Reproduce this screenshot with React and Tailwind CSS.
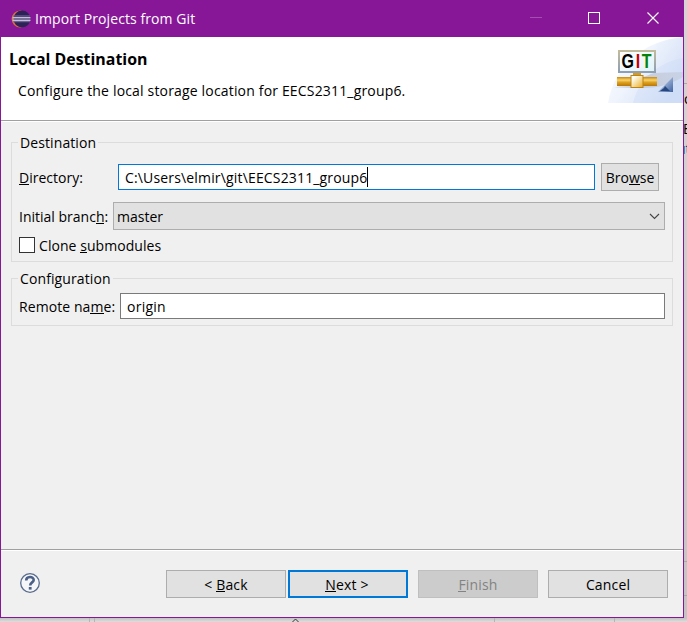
import React from 'react';

const U = ({ children }) => (
  <span className="relative">
    {children}
    <span className="absolute inset-x-0 bottom-[2px] h-px bg-current" />
  </span>
);

const EclipseIcon = () => (
  <svg width="20" height="18" viewBox="0 0 20 18" className="block">
    <circle cx="9.2" cy="9" r="8.6" fill="#d9713c" />
    <circle cx="11" cy="9" r="8.5" fill="#2c2255" />
    <path d="M2 6h17M2 11.7h17" stroke="#7d6fa8" strokeWidth="1" />
    <path d="M1.5 7.7h18M1.5 10.3h18" stroke="#c6bdd8" strokeWidth="1.5" />
  </svg>
);

const GitBanner = () => (
  <svg width="75" height="66" viewBox="0 0 75 66" className="block">
    <defs>
      <linearGradient id="sky" x1="0" y1="0" x2="1" y2="0.6">
        <stop offset="0" stopColor="#ffffff" />
        <stop offset="0.5" stopColor="#eff4fd" />
        <stop offset="1" stopColor="#d3dff6" />
      </linearGradient>
      <linearGradient id="sign" x1="0" y1="0" x2="1" y2="1">
        <stop offset="0" stopColor="#ffffff" />
        <stop offset="1" stopColor="#dff2f8" />
      </linearGradient>
      <linearGradient id="frame" x1="0" y1="0" x2="0" y2="1">
        <stop offset="0" stopColor="#c1bb9b" />
        <stop offset="1" stopColor="#8d9fb4" />
      </linearGradient>
      <linearGradient id="pipe" x1="0" y1="0" x2="0" y2="1">
        <stop offset="0" stopColor="#c88a10" />
        <stop offset="0.35" stopColor="#f9d268" />
        <stop offset="0.6" stopColor="#dda021" />
        <stop offset="1" stopColor="#b97805" />
      </linearGradient>
      <linearGradient id="node" x1="0" y1="0" x2="1" y2="1">
        <stop offset="0.2" stopColor="#fffdf2" />
        <stop offset="1" stopColor="#eaaa20" />
      </linearGradient>
      <linearGradient id="shade" x1="0" y1="0" x2="1" y2="0">
        <stop offset="0" stopColor="#b9bdc8" stopOpacity="0.2" />
        <stop offset="0.3" stopColor="#b9bdc8" stopOpacity="0.7" />
        <stop offset="1" stopColor="#b9bdc8" stopOpacity="0.35" />
      </linearGradient>
      <linearGradient id="fin" x1="0" y1="0" x2="1" y2="1">
        <stop offset="0.4" stopColor="#9db4d8" />
        <stop offset="1" stopColor="#3f62a0" />
      </linearGradient>
    </defs>
    <path d="M0 66C6 30 34 4 75 0V66Z" fill="url(#sky)" />
    <path d="M25 66C30 44 48 26 75 21V66Z" fill="#c9d9f5" fillOpacity="0.35" />
    <path d="M6 51L46 36L75 35V40C62 48 48 51 36 51Z" fill="url(#shade)" />
    <rect x="11" y="14" width="36" height="21" fill="url(#sign)" stroke="url(#frame)" strokeWidth="2" />
    <rect x="25" y="36" width="8" height="3" fill="#d49a22" />
    <rect x="9" y="40" width="40" height="9" fill="url(#pipe)" />
    <rect x="23" y="38.5" width="12" height="12" fill="url(#node)" stroke="#b98316" />
    <path d="M65 40V55H50Z" fill="url(#fin)" />
    <path d="M52 54L56 51L57 49L60 52L62 54Z" fill="#27467d" />
    <text transform="scale(0.78 1)" y="31.5" fontSize="20.5" className="font-['Liberation_Sans',sans-serif] font-bold">
      <tspan x="17.2" fill="#000">G</tspan>
      <tspan x="35.6" fill="#c5000b">I</tspan>
      <tspan x="43.2" fill="#078207">T</tspan>
    </text>
  </svg>
);

const Group = ({ title, className, children }) => (
  <section className={`relative border border-[#dcdcdc] ${className}`}>
    <h2 className="absolute -top-[10px] left-[6px] bg-[#f0f0f0] px-[2px] leading-5 tracking-[0.1px]">{title}</h2>
    {children}
  </section>
);

const Button = ({ className, children }) => (
  <button className={`flex h-7 w-[120px] items-center justify-center pt-px tracking-[0.15px] ${className}`}>
    <span>{children}</span>
  </button>
);

export default function App() {
  return (
    <div className="relative h-[622px] w-[687px] overflow-hidden bg-[#dedede] font-['Open_Sans','Noto_Sans',sans-serif] text-[14px] leading-5 whitespace-nowrap text-black">
      <div className="absolute top-0 right-0 h-full w-[3px] overflow-hidden bg-gradient-to-b from-[#d5d5d5] to-[#c4c4c4]">
        <div className="absolute top-[83px] h-px w-full bg-[#aaa]" />
        <span className="absolute top-[89px] left-0">o</span>
        <span className="absolute top-[119px] -left-px">E</span>
        <span className="absolute top-[139px] -left-[7px] text-[#12408c]">ut</span>
        <div className="absolute top-[561px] h-px w-full bg-[#aaa]" />
        <div className="absolute top-[595px] h-px w-full bg-[#aaa]" />
      </div>
      <div className="absolute bottom-0 left-0 h-[4px] w-full overflow-hidden bg-gradient-to-b from-[#c2c2c2] to-[#dedede]">
        <div className="absolute left-[89px] h-full w-[6px] border-x border-[#b5b5b5]" />
        <div className="absolute left-[494px] h-full w-px bg-[#b5b5b5]" />
        <div className="absolute left-[614px] h-full w-px bg-[#b5b5b5]" />
        <svg className="absolute top-0 left-[291px]" width="9" height="4" viewBox="0 0 9 4" fill="none" stroke="#333">
          <path d="M1 4.5L4.5 1L8 4.5" />
        </svg>
      </div>

      <div className="relative flex h-[618px] w-[684px] flex-col border border-t-0 border-[#881798] bg-[#f0f0f0]">
        <header className="flex h-[37px] shrink-0 items-center bg-[#881798] pl-[10px] text-white">
          <EclipseIcon />
          <h1 className="ml-1 flex-1 tracking-[0.08px]">Import Projects from Git</h1>
          <svg width="153" height="37" viewBox="0 0 153 37" fill="none" stroke="#fff">
            <path d="M0 17.5h12" stroke="#a64db3" />
            <rect x="58.5" y="12.5" width="11" height="11" />
            <path d="M117.5 12.5l11 11M128.5 12.5l-11 11" strokeWidth="1.1" />
          </svg>
        </header>

        <div className="flex h-[84px] shrink-0 justify-between border-b border-[#a0a0a0] bg-white pl-2">
          <div className="pt-[12px]">
            <h2 className="text-[15.9px] leading-5 font-bold">Local Destination</h2>
            <p className="mt-[12px] pl-[9px] tracking-[0.17px]">Configure the local storage location for EECS2311_group6.</p>
          </div>
          <GitBanner />
        </div>

        <main className="h-[428px] shrink-0 border-t border-white px-[10px] pt-[20px]">
          <Group title="Destination" className="h-[120px] pt-5 pr-[7px] pl-[7px]">
            <div className="flex h-7 items-center">
              <label className="w-[99px] pt-[2px]"><U>D</U>irectory:</label>
              <div className="flex h-[26px] w-[477px] items-center border border-[#0078d7] bg-white pl-[6px]">
                <span className="pt-[2px] tracking-[0.16px]">C:\Users\elmir\git\EECS2311_group6</span>
                <span className="h-5 w-px bg-black" />
              </div>
              <button className="ml-[6px] flex h-7 w-[58px] items-center justify-center border border-[#adadad] bg-[#e1e1e1] pt-[2px]">
                <span>Bro<U>w</U>se</span>
              </button>
            </div>
            <div className="mt-[11px] flex h-7 items-center">
              <label className="w-[94px] pt-[2px]">Initial branc<U>h</U>:</label>
              <div className="flex h-7 w-[552px] items-center justify-between border border-[#adadad] bg-[#e1e1e1] pr-1 pl-[3px]">
                <span className="pt-[2px]">master</span>
                <svg width="11" height="7" viewBox="0 0 11 7" fill="none" stroke="#444" strokeWidth="1.1">
                  <path d="M1 1L5.5 5.5L10 1" />
                </svg>
              </div>
            </div>
            <label className="mt-[5px] flex h-5 items-center gap-1">
              <span className="size-4 border border-[#333] bg-white" />
              <span className="pt-[2px] tracking-[0.06px]">Clone <U>s</U>ubmodules</span>
            </label>
          </Group>
          <Group title="Configuration" className="mt-4 h-[48px] pt-[14px] pl-[7px]">
            <div className="flex h-[26px] items-center">
              <label className="w-[101px] pt-[2px] tracking-[0.08px]">Remote na<U>m</U>e:</label>
              <div className="flex h-[26px] w-[545px] items-center border border-[#7a7a7a] bg-white pt-[2px] pl-[6px] tracking-[0.25px]">origin</div>
            </div>
          </Group>
        </main>

        <footer className="flex flex-1 border-t border-[#a0a0a0]">
          <div className="flex w-full items-start border-t border-white pt-[19px] pl-[18px]">
            <svg width="22" height="22" viewBox="0 0 22 22" className="mt-[2px] mr-[125px] block" fill="none">
              <circle cx="11" cy="11" r="9.3" fill="#f5f6f8" stroke="#596b8d" strokeWidth="1.3" />
              <path d="M7.2 8.6C7.2 4 14.7 4 14.7 8C14.7 10.4 11.2 10.4 11.2 13.4" stroke="#4c5f87" strokeWidth="2.6" />
              <rect x="9.8" y="15" width="2.8" height="2.6" fill="#4c5f87" />
            </svg>
            <Button className="border border-[#adadad] bg-[#e1e1e1]">&lt; <U>B</U>ack</Button>
            <Button className="ml-[2px] border-2 border-[#0078d7] bg-[#e1e1e1] pr-[2px]"><U>N</U>ext &gt;</Button>
            <Button className="ml-[10px] border border-[#bfbfbf] bg-[#cccccc] text-[#838383]"><U>F</U>inish</Button>
            <Button className="ml-[10px] border border-[#adadad] bg-[#e1e1e1]">Cancel</Button>
          </div>
        </footer>
      </div>
    </div>
  );
}
